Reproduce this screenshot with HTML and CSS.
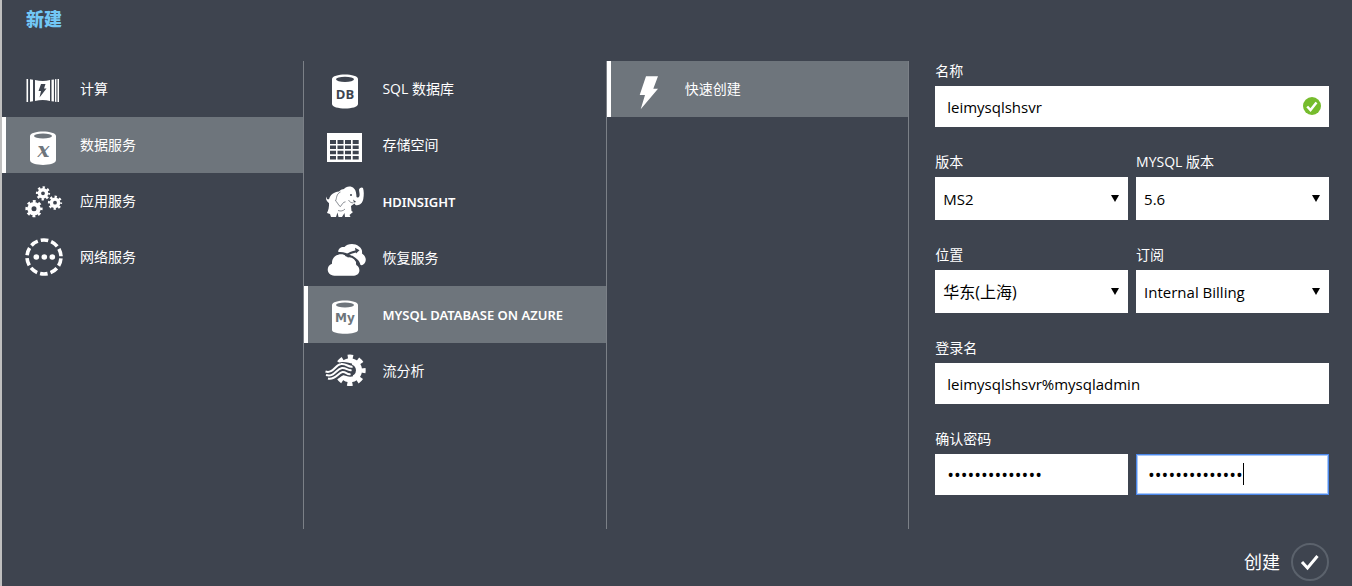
FILE: index.html
```html
<!DOCTYPE html>
<html lang="zh-CN">
<head>
    <meta charset="UTF-8">
    <meta name="viewport" content="width=device-width, initial-scale=1.0">
    <title>新建</title>
    <link rel="stylesheet" href="styles.css">
</head>
<body>
    <div class="drawer">
        <header class="header">
            <h1>新建</h1>
        </header>

        <main class="columns">
            <nav class="menu">
                <button type="button" class="menu-item">
                    <svg class="icon" viewBox="0 0 40 40">
                        <path d="M3.5 10h1.6v23H3.5zM7 10.3l3 .4v21.6l-3 .4zM28.5 10.7l2.4-.3v22.2l-2.4-.3zM32 10.2l1.4-.1v22.8l-1.4-.1zM34.5 10H36v23h-1.5z"/>
                        <path d="M12 11Q20 13 27 11V32Q20 30 12 32Z"/>
                        <path class="cut" d="M18 15h4.500l-1.500 4.500H23.500L16.500 28.500l1.500-6.500H15.500z"/>
                    </svg>
                    <span>计算</span>
                </button>
                <button type="button" class="menu-item selected">
                    <svg class="icon" viewBox="0 0 40 40">
                        <path d="M7 11C7 5 33 5 33 11V35C33 41.5 7 41.5 7 35Z"/>
                        <ellipse class="cut" cx="20" cy="11" rx="9" ry="2.6"/>
                        <text class="glyph glyph-x" x="20.5" y="32">x</text>
                    </svg>
                    <span>数据服务</span>
                </button>
                <button type="button" class="menu-item">
                    <svg class="icon" viewBox="0 0 40 40">
                        <g class="line">
                            <circle cx="20" cy="12.3" r="3.6" stroke-width="3.4"/>
                            <circle cx="20" cy="12.3" r="5.8" stroke-width="2.6" stroke-dasharray="2.28" stroke-dashoffset="1.14"/>
                            <circle cx="11" cy="27.7" r="4.6" stroke-width="4.2"/>
                            <circle cx="11" cy="27.7" r="7.2" stroke-width="2.8" stroke-dasharray="2.83" stroke-dashoffset="1.41"/>
                            <circle cx="32" cy="21.7" r="3.6" stroke-width="3.4"/>
                            <circle cx="32" cy="21.7" r="5.8" stroke-width="2.6" stroke-dasharray="2.28" stroke-dashoffset="1.14"/>
                        </g>
                    </svg>
                    <span>应用服务</span>
                </button>
                <button type="button" class="menu-item">
                    <svg class="icon" viewBox="0 0 40 40">
                        <!-- ten dashes, one centred at the top -->
                        <circle class="line" cx="21" cy="20" r="17" stroke-width="3.6" stroke-dasharray="7.68 3" stroke-dashoffset="-1.5"/>
                        <circle cx="13.3" cy="20" r="2.8"/>
                        <circle cx="21.3" cy="20" r="2.8"/>
                        <circle cx="29.3" cy="20" r="2.8"/>
                    </svg>
                    <span>网络服务</span>
                </button>
            </nav>

            <nav class="menu">
                <button type="button" class="menu-item">
                    <svg class="icon" viewBox="0 0 40 40">
                        <path d="M7 10C7 4 33 4 33 10V35C33 41 7 41 7 35Z"/>
                        <ellipse class="cut" cx="20" cy="10.3" rx="9" ry="2.6"/>
                        <text class="glyph glyph-db" x="20" y="30">DB</text>
                    </svg>
                    <span>SQL 数据库</span>
                </button>
                <button type="button" class="menu-item">
                    <svg class="icon" viewBox="0 0 40 40">
                        <path d="M2 8h35v29H2z"/>
                        <path class="cut" d="M5 15h6v4H5zM12.5 15h6v4h-6zM20 15h6v4h-6zM27.7 15h6v4h-6zM5 20.5h6V24H5zM12.5 20.5h6V24h-6zM20 20.5h6V24h-6zM27.7 20.5h6V24h-6zM5 25.7h6v3.5H5zM12.5 25.7h6v3.5h-6zM20 25.7h6v3.5h-6zM27.7 25.7h6v3.5h-6zM5 31h6v3.5H5zM12.5 31h6v3.5h-6zM20 31h6v3.5h-6zM27.7 31h6v3.5h-6z"/>
                    </svg>
                    <span>存储空间</span>
                </button>
                <button type="button" class="menu-item latin">
                    <svg class="icon" viewBox="0 0 40 40">
                        <path d="M1.5 14.5C1.5 17 2.5 17.5 4 17.2C5.5 12.5 9 10 14 9.5C16 7.5 17.5 7.2 19 7C21 4 26.5 3.5 29 6.5C31 8.5 31.2 11 31.5 15C33.5 16.5 34.8 15 34.6 12L34 8C34 6 37 4.5 38 6C39 9 39 13 38.3 17C37.5 21.5 34 24 30.5 23L29.5 21.5L26 24L26.5 29L28 30L24.5 33L25.5 35H20L19.5 31L17 35H13.5L12.5 30.5L11 35H6L5 32L2 31C3.5 28 4.2 25 4 21C2 19.5 .3 17.5 1.5 14.5Z"/>
                        <path class="cut-line faint" d="M15.5 10C11 12 12 16 10.5 19C13 20 13 24 15.5 24.5C17 22.5 18 20 20.5 19.8M23.5 18C25 20.5 26.5 21 28.5 20.8M13 28.5C16 29.5 18 29 20 27"/>
                        <circle class="cut" cx="26" cy="13" r="1"/>
                        <path class="cut" d="M28 17.5L31.2 20L29 20.5z"/>
                    </svg>
                    <span>HDINSIGHT</span>
                </button>
                <button type="button" class="menu-item">
                    <svg class="icon" viewBox="0 0 40 40">
                        <path d="M13.3 14C13 10.5 16 8.5 19.5 9C22 6 29 4.5 34 8.5C37 10.5 37.3 13 37 15.5C40.5 18 41.5 21 40.3 24C39.5 26.5 37 27.5 35.5 27C34.5 22 31 20 27.5 19.5C24 14.5 17.5 13.5 13.3 14Z"/>
                        <path d="M9.5 37.7C1.5 37.5 .5 28 7 25.8C6.5 17 17 13.5 22.5 19C28 17.7 32 22 31.3 27C36 29.5 35.5 37.5 29 37.7Z"/>
                        <path class="cut-line" d="M20.5 18C23.5 15.5 26.5 14 31.5 13.2"/>
                        <path class="cut-line" d="M22.5 18.5C28 17.5 33 22 32 26.5"/>
                        <path class="cut" d="M30 9.8L34.5 12.3L31 15.5z"/>
                    </svg>
                    <span>恢复服务</span>
                </button>
                <button type="button" class="menu-item latin selected">
                    <svg class="icon" viewBox="0 0 40 40">
                        <path d="M7 10C7 4 33 4 33 10V35C33 40 7 40 7 35Z"/>
                        <ellipse class="cut" cx="20" cy="10" rx="9" ry="2.6"/>
                        <text class="glyph glyph-my" x="20" y="27">My</text>
                    </svg>
                    <span>MYSQL DATABASE ON AZURE</span>
                </button>
                <button type="button" class="menu-item">
                    <svg class="icon" viewBox="0 0 40 40">
                        <circle class="line" cx="25" cy="19.3" r="9" stroke-width="6"/>
                        <!-- eight teeth -->
                        <circle class="line" cx="25" cy="19.3" r="13.5" stroke-width="4.4" stroke-dasharray="5.3" stroke-dashoffset="2.65"/>
                        <path class="cut-wide" d="M0 22.5C9 25 11 16 17 15.5C21 15 23 17 27 17M1 26C10 28 12 21 17 20C21 19 23 22 27 21"/>
                        <path class="wave" d="M.5 20.5C8 23 10 14 16 13C21 12 24 17 27.5 15.5M1 24C9 26.5 11 18 17 17C21 16.5 23 20 26.5 19M3 27.5C10 29.5 13 22 17.5 21C21 20.5 22 24 25.5 23"/>
                    </svg>
                    <span>流分析</span>
                </button>
            </nav>

            <nav class="menu">
                <button type="button" class="menu-item selected">
                    <svg class="icon" viewBox="0 0 40 40">
                        <path d="M18 7.3H30L25.3 19.7H30L12.7 40.3L17 26H11.7Z"/>
                    </svg>
                    <span>快速创建</span>
                </button>
            </nav>

            <form class="form" id="createForm">
                <div class="field">
                    <label for="name">名称</label>
                    <div class="control">
                        <input type="text" id="name" value="leimysqlshsvr">
                        <svg class="valid" viewBox="0 0 18 18">
                            <circle cx="9" cy="9" r="9"/>
                            <path d="M4.2 9.5L7.5 13L13.5 5.5"/>
                        </svg>
                    </div>
                </div>

                <div class="row">
                    <div class="field">
                        <label for="edition">版本</label>
                        <div class="control">
                            <select id="edition"><option>MS2</option></select>
                            <span class="arrow"></span>
                        </div>
                    </div>
                    <div class="field">
                        <label for="version">MYSQL 版本</label>
                        <div class="control">
                            <select id="version"><option>5.6</option></select>
                            <span class="arrow"></span>
                        </div>
                    </div>
                </div>

                <div class="row">
                    <div class="field">
                        <label for="region">位置</label>
                        <div class="control">
                            <select id="region" class="region"><option>华东(上海)</option></select>
                            <span class="arrow"></span>
                        </div>
                    </div>
                    <div class="field">
                        <label for="subscription">订阅</label>
                        <div class="control">
                            <select id="subscription"><option>Internal Billing</option></select>
                            <span class="arrow"></span>
                        </div>
                    </div>
                </div>

                <div class="field">
                    <label for="login">登录名</label>
                    <input type="text" id="login" value="leimysqlshsvr%mysqladmin">
                </div>

                <div class="row">
                    <div class="field">
                        <label for="password">确认密码</label>
                        <input type="password" id="password" value="12345678901234">
                    </div>
                    <div class="control">
                        <input type="password" class="active" aria-label="确认密码" value="12345678901234">
                        <span class="caret"></span>
                    </div>
                </div>
            </form>
        </main>

        <footer class="footer">
            <button type="submit" form="createForm" class="create">
                <span>创建</span>
                <svg class="create-icon" viewBox="0 0 38 38">
                    <circle cx="19" cy="19" r="18"/>
                    <path d="M11 19L16.5 25L26.5 13"/>
                </svg>
            </button>
        </footer>
    </div>
</body>
</html>
```

FILE: styles.css
```css
* {
    margin: 0;
    padding: 0;
    box-sizing: border-box;
}

body {
    font-family: 'Open Sans', 'Noto Sans CJK SC', sans-serif;
    font-size: 14px;
    line-height: 20px;
    background: #3e444f;
    color: #fff;
}

button,
input,
select {
    font-family: inherit;
    border: none;
    border-radius: 0;
}

.drawer {
    display: flex;
    flex-direction: column;
    min-height: 100vh;
    border-left: 2px solid #bfbfbf;
}

.header {
    padding: 6px 24px 29px;
}

.header h1 {
    font-size: 18px;
    line-height: 26px;
    font-weight: 900;
    color: #72c7f5;
}

.columns {
    flex: 1;
    display: grid;
    grid-template-columns: repeat(3, 22.4%) 1fr;
}

.menu {
    border-right: 1px solid #7b8087;
}

.menu-item {
    --surface: #3e444f;
    display: flex;
    align-items: center;
    gap: 17px;
    width: 100%;
    height: 56px;
    padding-left: 17px;
    border-left: 4px solid transparent;
    background: var(--surface);
    color: #fff;
    font-size: 14px;
    line-height: 20px;
    text-align: left;
    cursor: pointer;
}

.menu-item.latin {
    height: 57px;
    font-family: 'Noto Sans', sans-serif;
    font-size: 13px;
    font-weight: 600;
}

.menu-item.selected {
    --surface: #6e757c;
    border-left-color: #fff;
}

.icon {
    flex: none;
    width: 40px;
    height: 40px;
    fill: #fff;
    overflow: visible;
}

.icon .cut {
    fill: var(--surface);
}

.icon .cut-line {
    fill: none;
    stroke: var(--surface);
    stroke-width: 2;
}

.icon .cut-line.faint {
    stroke-width: 1;
    opacity: 0.6;
}

.icon .cut-wide {
    fill: none;
    stroke: var(--surface);
    stroke-width: 9;
}

.icon .line {
    fill: none;
    stroke: #fff;
}

.icon .wave {
    fill: none;
    stroke: #fff;
    stroke-width: 2;
}

.icon .glyph {
    fill: var(--surface);
    font-weight: 700;
    text-anchor: middle;
}

.icon .glyph-x {
    font-family: 'DejaVu Serif', serif;
    font-style: italic;
    font-size: 20px;
}

.icon .glyph-db {
    font-size: 13px;
}

.icon .glyph-my {
    font-family: 'DejaVu Sans', sans-serif;
    font-size: 12px;
}

.form {
    display: flex;
    flex-direction: column;
    gap: 25px;
    padding: 0 23px 0 26px;
}

.row {
    display: grid;
    grid-template-columns: 1fr 1fr;
    gap: 8px;
    align-items: end;
}

.field label {
    display: block;
    margin-bottom: 5px;
}

.control {
    position: relative;
}

input,
select {
    display: block;
    width: 100%;
    background: #fff;
    color: #000;
    font-size: 15px;
}

input {
    height: 41px;
    padding: 0 12px;
    outline: none;
}

input[type="password"] {
    font-size: 18px;
}

input.active {
    border: 1px solid #4b87ea;
    box-shadow: inset 0 0 0 1px #a9c8f8;
    padding: 0 11px;
}

select {
    height: 43px;
    padding: 0 24px 0 8px;
    appearance: none;
}

select.region {
    font-size: 16px;
}

.arrow {
    position: absolute;
    top: 18px;
    right: 9px;
    border: 4px solid transparent;
    border-top: 7px solid #000;
    border-bottom: none;
    pointer-events: none;
}

.valid {
    position: absolute;
    top: 11px;
    right: 8px;
    width: 18px;
    height: 18px;
    fill: #76bc2d;
}

.valid path {
    fill: none;
    stroke: #fff;
    stroke-width: 2.5;
}

.caret {
    position: absolute;
    top: 9px;
    left: 107px;
    width: 1px;
    height: 22px;
    background: #000;
}

.footer {
    display: flex;
    justify-content: flex-end;
    padding: 14px 23px 5px;
}

.create {
    display: flex;
    align-items: center;
    gap: 11px;
    background: none;
    color: #fff;
    font-size: 18px;
    line-height: 26px;
    cursor: pointer;
}

.create-icon {
    width: 38px;
    height: 38px;
    fill: none;
    stroke: #5b626c;
    stroke-width: 2;
}

.create-icon path {
    stroke: #fff;
    stroke-width: 3;
}
```
